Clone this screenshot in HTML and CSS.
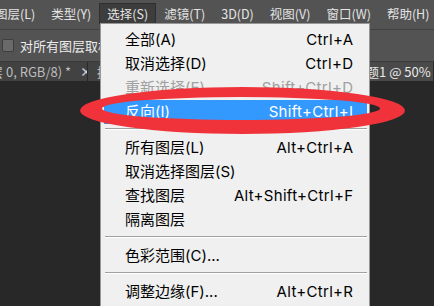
FILE: index.html
```html
<!DOCTYPE html>
<html lang="zh-CN">
<head>
<meta charset="utf-8">
<title>选择菜单</title>
<link rel="stylesheet" href="styles.css">
</head>
<body>
<div class="app">
  <nav class="menubar">
    <span class="mb-item mb-cut">图层(L)</span>
    <span class="mb-item">类型(Y)</span>
    <span class="mb-item mb-active">选择(S)</span>
    <span class="mb-item">滤镜(T)</span>
    <span class="mb-item">3D(D)</span>
    <span class="mb-item">视图(V)</span>
    <span class="mb-item">窗口(W)</span>
    <span class="mb-item">帮助(H)</span>
  </nav>
  <div class="options">
    <span class="checkbox"></span>
    <span class="opt-label">对所有图层取样</span>
  </div>
  <div class="tabs">
    <div class="tab tab-first"><span class="tab-text">层 0, RGB/8) *</span><span class="tab-close">×</span></div>
    <div class="tab tab-second"><span class="tab-text">拼图.psd @ 66.7% (图层 1, RGB/8) *</span></div>
    <div class="tab tab-third"><span class="tab-text">未标题1 @ 50% (RGB/8)</span></div>
  </div>
  <div class="canvas"></div>

  <div class="dropdown">
    <div class="row"><span>全部(A)</span><span class="key">Ctrl+A</span></div>
    <div class="row"><span>取消选择(D)</span><span class="key">Ctrl+D</span></div>
    <div class="row disabled"><span>重新选择(E)</span><span class="key">Shift+Ctrl+D</span></div>
    <div class="row hl"><span>反向(I)</span><span class="key">Shift+Ctrl+I</span></div>
    <div class="sep"></div>
    <div class="row"><span>所有图层(L)</span><span class="key">Alt+Ctrl+A</span></div>
    <div class="row"><span>取消选择图层(S)</span><span class="key"></span></div>
    <div class="row"><span>查找图层</span><span class="key">Alt+Shift+Ctrl+F</span></div>
    <div class="row"><span>隔离图层</span><span class="key"></span></div>
    <div class="sep"></div>
    <div class="row"><span>色彩范围(C)...</span><span class="key"></span></div>
    <div class="sep"></div>
    <div class="row"><span>调整边缘(F)...</span><span class="key">Alt+Ctrl+R</span></div>
  </div>

  <svg class="circle" width="434" height="306" viewBox="0 0 434 306">
    <path fill="#f0323a" fill-rule="evenodd"
      d="M80 110.5 A162.5 23.5 0 1 0 405 110.5 A162.5 23.5 0 1 0 80 110.5 Z
         M102 108.5 A139 11.5 0 1 0 380 108.5 A139 11.5 0 1 0 102 108.5 Z"/>
  </svg>
</div>
</body>
</html>
```
FILE: styles.css
```css
* { box-sizing: border-box; }
html, body { margin: 0; padding: 0; }
body {
  width: 434px;
  height: 306px;
  overflow: hidden;
  background: #282828;
  font-family: "Noto Sans CJK SC", sans-serif;
}
.app {
  position: relative;
  width: 434px;
  height: 306px;
  display: flex;
  flex-direction: column;
}
.menubar {
  height: 30px;
  background: #535353;
  border-bottom: 1px solid #424242;
  display: flex;
  align-items: flex-start;
  padding-top: 3px;
  font-size: 12.5px;
  color: #e4e4e4;
}
.mb-item {
  height: 21px;
  line-height: 22px;
  padding: 0 8px;
  white-space: nowrap;
}
.mb-cut { margin-left: -13px; }
.mb-active {
  background: #3d3d3d;
  border: 1px solid #2f2f2f;
  border-bottom: none;
  line-height: 20px;
  height: 21px;
  padding: 0 7px;
}
.options {
  height: 32px;
  background: #535353;
  border-bottom: 1px solid #3a3a3a;
  display: flex;
  align-items: center;
  padding-left: 2px;
  font-size: 13px;
  color: #ececec;
}
.checkbox {
  width: 12px;
  height: 13px;
  background: #6a6a6a;
  border: 1px solid #3e3e3e;
  border-radius: 2px;
  margin-right: 6px;
}
.tabs {
  height: 19px;
  background: #3b3b3b;
  display: flex;
  font-size: 13px;
  color: #bdbdbd;
  white-space: nowrap;
  overflow: hidden;
}
.tab {
  display: flex;
  align-items: center;
  overflow: hidden;
  border-right: 1px solid #2a2a2a;
}
.tab-first { width: 88px; background: #424242; }
.tab-first .tab-text { margin-left: -10px; }
.tab-close { margin-left: 9px; font-size: 12px; color: #d0d0d0; font-weight: bold; }
.tab-second { width: 252px; background: #424242; padding-left: 9px; }
.tab-third { flex: 1; background: #4a4a4a; padding-left: 0; color: #e8e8e8; }
.canvas { flex: 1; background: #282828; }

.dropdown {
  position: absolute;
  left: 100px;
  top: 23px;
  width: 270px;
  height: 290px;
  background: #f0f0f0;
  border: 1px solid #979797;
  border-bottom: none;
  padding-top: 4px;
  font-family: "Inter", "Noto Sans CJK SC", sans-serif;
  font-size: 15px;
  color: #000;
}
.row {
  height: 24px;
  line-height: 24px;
  margin: 0 2px 0 3px;
  padding: 0 14px 0 21px;
  display: flex;
  justify-content: space-between;
  white-space: nowrap;
}
.key { letter-spacing: 0.3px; margin-right: -0.3px; }
.row.disabled { color: #a0a0a0; }
.row.hl { background: #3399ff; color: #fff; }
.sep {
  margin: 4px 2px 6px 4px;
  border-top: 1px solid #a0a0a0;
  border-bottom: 1px solid #ffffff;
}
.circle {
  position: absolute;
  left: 0;
  top: 0;
  pointer-events: none;
}
```
